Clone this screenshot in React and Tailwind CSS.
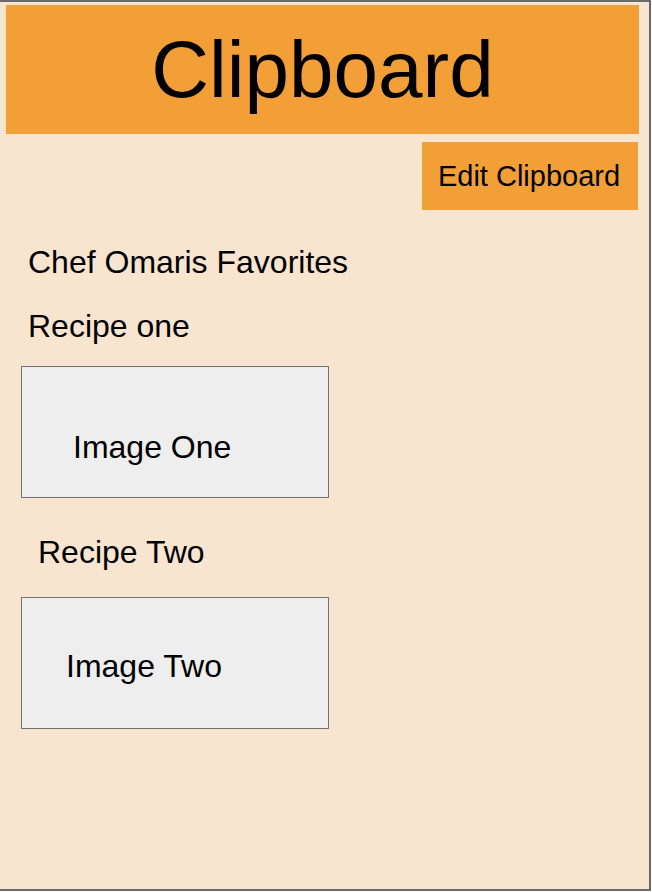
import React from 'react';

function ImageBox({ label, padTop, padLeft }) {
    return (
        <div className={`ml-[21px] w-[308px] h-[132px] bg-[#eeeeee] border border-[#737373] ${padTop} ${padLeft}`}>
            <div className="text-[32px] leading-none text-black">{label}</div>
        </div>
    );
}

export default function App() {
    return (
        <div className="w-[652px] h-[892px] bg-white font-['Liberation_Sans',Arial,sans-serif]">
            <div className="w-[651px] h-[891px] flex flex-col bg-[#f8e5d0] border-t-2 border-r-2 border-b-2 border-[#6b6b6b]">
                {/* Header */}
                <div className="mt-[3px] ml-[6px] w-[633px] h-[129px] bg-[#f29f38] flex justify-center pt-[25px]">
                    <h1 className="text-[80px] leading-none text-black">Clipboard</h1>
                </div>

                {/* Edit button */}
                <div className="mt-[8px] ml-[6px] w-[633px] flex justify-end pr-[1px]">
                    <button className="w-[216px] h-[68px] bg-[#f29f38] flex items-center justify-center pr-[2px] text-[29px] leading-none text-black">
                        Edit Clipboard
                    </button>
                </div>

                {/* Favorites list */}
                <div className="mt-[36px] ml-[28px] text-[32px] leading-none text-black">Chef Omaris Favorites</div>
                <div className="mt-[32px] ml-[28px] text-[32px] leading-none text-black">Recipe one</div>
                <div className="mt-[24px]">
                    <ImageBox label="Image One" padTop="pt-[64px]" padLeft="pl-[51px]" />
                </div>
                <div className="mt-[38px] ml-[38px] text-[32px] leading-none text-black">Recipe Two</div>
                <div className="mt-[29px]">
                    <ImageBox label="Image Two" padTop="pt-[52px]" padLeft="pl-[44px]" />
                </div>
            </div>
        </div>
    );
}
